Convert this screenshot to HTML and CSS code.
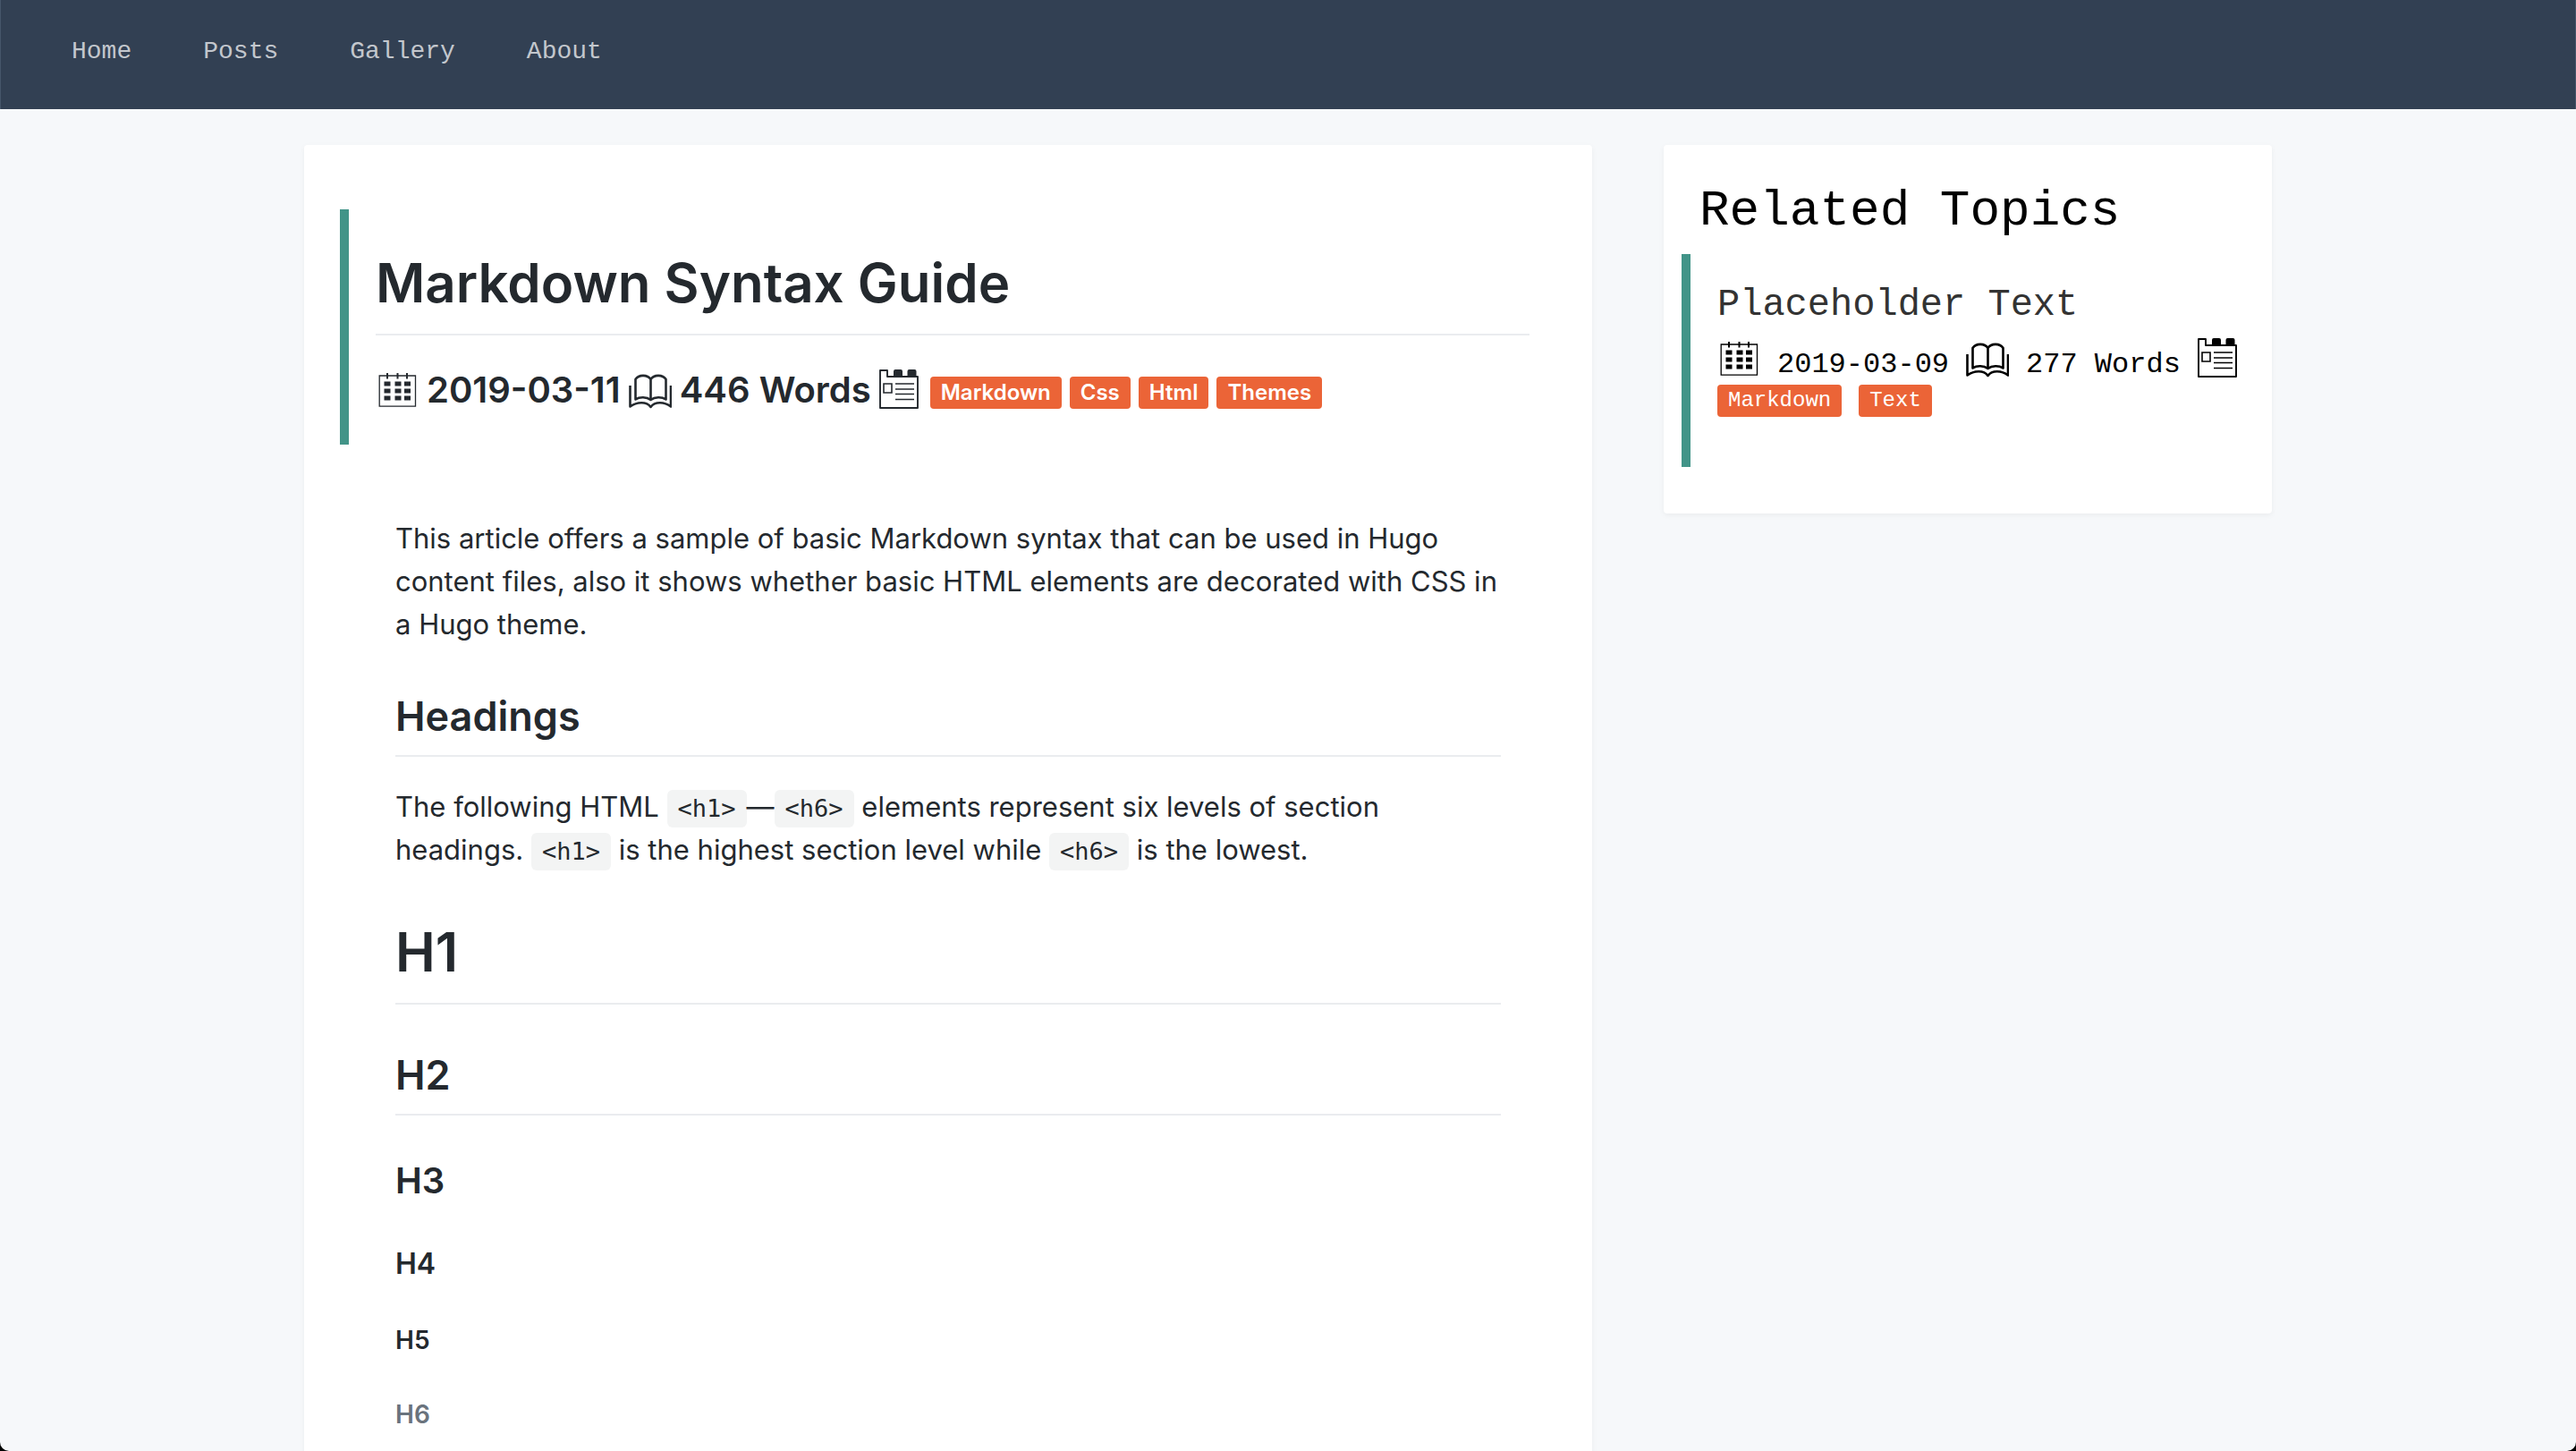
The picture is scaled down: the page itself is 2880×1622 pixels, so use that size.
FILE: index.html
```html
<!DOCTYPE html>
<html lang="en">
<head>
<meta charset="utf-8">
<title>Markdown Syntax Guide</title>
<link rel="stylesheet" href="styles.css">
</head>
<body>
<svg class="sprite" aria-hidden="true">
  <symbol id="calendar" viewBox="0 0 48 48">
    <path d="M4.200 9H44.500V43.200H4.200Z" fill="none" stroke="currentColor" stroke-width="1.300"/>
    <path d="M13 6v6.500M24.500 6v6.500M35 6v6.500" fill="none" stroke="currentColor" stroke-width="2"/>
    <path d="M9.500 15.500h7v5h-7zM21.500 15.500h7v5h-7zM32 15.500h7v5h-7zM9.500 23.500h7v5h-7zM21.500 23.500h7v5h-7zM32 23.500h7v5h-7zM9.500 31.500h7v5h-7zM21.500 31.500h7v5h-7zM32 31.500h7v5h-7z" fill="currentColor"/>
  </symbol>
  <symbol id="book" viewBox="0 0 48 48">
    <path d="M24.500 13C21 7.500 11 7.500 7.500 13V35.500C12 32.500 20 32.500 24.500 36C29 32.500 37 32.500 41.500 35.500V13C38 7.500 28 7.500 24.500 13V35M1.500 20V43.500C9 38 20 37.500 24.500 44C29 37.500 40 38 47 43.500V20" fill="none" stroke="currentColor" stroke-width="2.600" stroke-linejoin="round"/>
  </symbol>
  <symbol id="news" viewBox="0 0 48 48">
    <path d="M1 3h8v7h34v35H1Z" fill="none" stroke="currentColor" stroke-width="1.900" stroke-linejoin="round"/>
    <path d="M16 10V4q0-2 2-2h6q2 0 2 2v6zM31.500 10V4q0-2 2-2h6q2 0 2 2v6z" fill="currentColor"/>
    <path d="M5 18h9v10H5ZM18 18h21M18 24h21M18 29.500h21M18 35.500h21" fill="none" stroke="currentColor" stroke-width="1.600"/>
  </symbol>
</svg>
<div class="window">
  <header class="topbar">
    <nav class="nav">
      <a href="#">Home</a>
      <a href="#">Posts</a>
      <a href="#">Gallery</a>
      <a href="#">About</a>
    </nav>
  </header>
  <div class="layout">
    <main class="card post">
      <header class="post-head">
        <h1>Markdown Syntax Guide</h1>
        <div class="meta">
          <svg class="icon"><use href="#calendar"/></svg>
          <time datetime="2019-03-11">2019-03-11</time>
          <svg class="icon"><use href="#book"/></svg>
          <span>446 Words</span>
          <svg class="icon"><use href="#news"/></svg>
          <a class="badge" href="#">Markdown</a>
          <a class="badge" href="#">Css</a>
          <a class="badge" href="#">Html</a>
          <a class="badge" href="#">Themes</a>
        </div>
      </header>
      <article class="content">
        <p>This article offers a sample of basic Markdown syntax that can be used in Hugo content files, also it shows whether basic HTML elements are decorated with CSS in a Hugo theme.</p>
        <h2>Headings</h2>
        <p>The following HTML <code>&lt;h1&gt;</code>—<code>&lt;h6&gt;</code> elements represent six levels of section headings. <code>&lt;h1&gt;</code> is the highest section level while <code>&lt;h6&gt;</code> is the lowest.</p>
        <h1>H1</h1>
        <h2>H2</h2>
        <h3>H3</h3>
        <h4>H4</h4>
        <h5>H5</h5>
        <h6>H6</h6>
      </article>
    </main>
    <aside class="card related">
      <h2>Related Topics</h2>
      <section class="topic">
        <h3><a href="#">Placeholder Text</a></h3>
        <div class="meta">
          <svg class="icon"><use href="#calendar"/></svg>
          <time datetime="2019-03-09">2019-03-09</time>
          <svg class="icon"><use href="#book"/></svg>
          <span>277 Words</span>
          <svg class="icon"><use href="#news"/></svg>
          <a class="badge" href="#">Markdown</a>
          <a class="badge" href="#">Text</a>
        </div>
      </section>
    </aside>
  </div>
</div>
</body>
</html>
```
FILE: styles.css
```css
* { box-sizing: border-box; }
html { background: #000; }
body { margin: 0; font-family: "Courier New", "Liberation Mono", monospace; color: #000; }
a { color: inherit; text-decoration: none; }
h1, h2, h3, h4, h5, h6, p { margin: 0; }
.sprite { display: none; }

.window {
  height: 100vh;
  overflow-y: auto;
  scrollbar-width: none;
  background: #f6f8fa;
  border-radius: 0 0 10px 10px;
}

.topbar {
  background: #324053;
  border: solid #46566a;
  border-width: 0 1px;
  padding: 42px 79px 48px;
}
.nav { display: flex; gap: 80px; font-size: 28px; line-height: 32px; color: #c3c7cd; }

.layout {
  display: grid;
  grid-template-columns: 36fr 17fr;
  gap: 80px;
  align-items: start;
  max-width: 2200px;
  margin: 40px auto 80px;
}
.card { background: #fff; border-radius: 4px; box-shadow: 0 2px 6px rgba(0, 0, 0, .05); }

.post { padding: 72px 40px 80px; font-family: Inter, sans-serif; color: #24292e; }
.post-head { border-left: 10px solid #429488; padding: 40px 30px 36px; }
.post h1, .post h2, .post h3, .post h4, .post h5, .post h6 { font-weight: 600; line-height: 1.25; }
.post h1 { font-size: 60px; line-height: 84px; padding-bottom: 15px; border-bottom: 2px solid #eaecef; }
.post h2 { font-size: 45px; line-height: 62px; padding-bottom: 12px; border-bottom: 2px solid #eaecef; }
.post h3 { font-size: 40px; }
.post h4 { font-size: 32px; }
.post h5 { font-size: 28px; }
.post h6 { font-size: 28px; color: #6a737d; }

.meta { display: flex; flex-wrap: wrap; align-items: flex-end; }
.icon { width: 48px; height: 48px; margin-bottom: 2px; }
.badge {
  margin-bottom: 4px;
  padding: 0 12px;
  border-radius: 4px;
  background: #eb6437;
  color: #fff;
  font-size: 24px;
  line-height: 36px;
}
.post .meta { margin-top: 36px; gap: 9px; font-size: 40px; font-weight: 600; line-height: 50px; }

.content { padding: 81px 62px 0; font-size: 31px; line-height: 48px; }
.content > * + * { margin-top: 48px; }
.content h2 + p { margin-top: 32px; }
code {
  display: inline-block;
  padding: 0 12px;
  border-radius: 6px;
  background: #f3f4f4;
  font-family: "DejaVu Sans Mono", monospace;
  font-size: 27px;
  line-height: 42px;
}

.related { padding: 34px 20px 52px; }
.related h2 { padding-left: 20px; margin-bottom: 8px; font-size: 56px; font-weight: 400; line-height: 80px; }
.topic { border-left: 10px solid #429488; padding: 32px 0 52px 30px; }
.topic h3 { font-size: 42px; font-weight: 400; line-height: 50px; color: #333; }
.topic .meta { margin-top: 10px; gap: 4px 19px; font-size: 32px; line-height: 36px; }
```
